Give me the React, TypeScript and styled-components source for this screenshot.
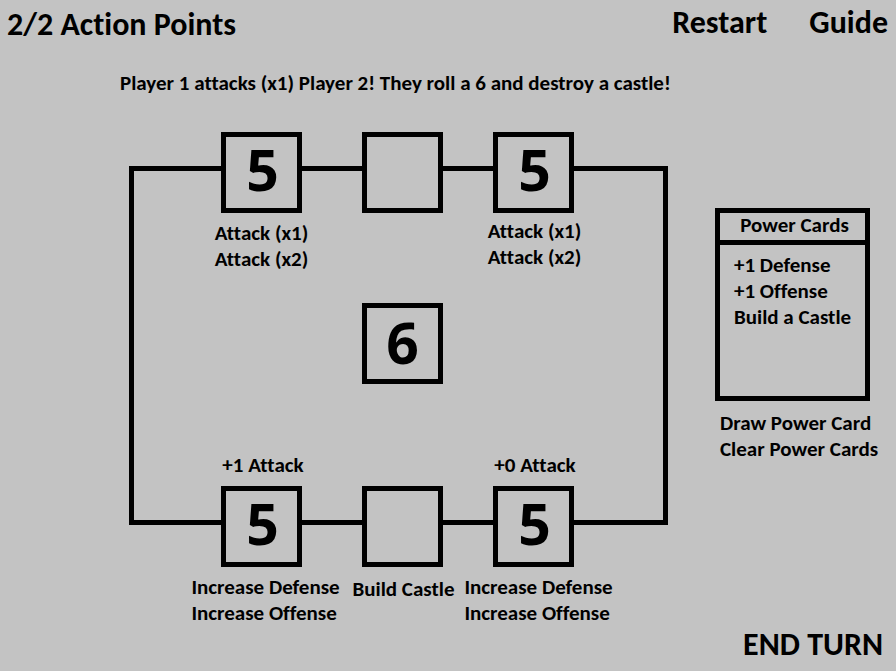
import React from "react";
import styled, { createGlobalStyle } from "styled-components";

const GlobalStyle = createGlobalStyle`
  * { box-sizing: border-box; }
  body {
    margin: 0;
    background: #c3c3c3;
    color: #000;
    font: 700 21px/26px Carlito, Calibri, Lato, sans-serif;
    font-variant-ligatures: none;
  }
`;

const Page = styled.div`
  display: flex;
  flex-direction: column;
  min-height: 100vh;
`;

const Header = styled.header`
  display: flex;
  justify-content: space-between;
  align-items: flex-start;
  padding: 4px 8px 0 7px;
  height: 44px;
`;

const ActionPoints = styled.h1`
  margin: 0;
  padding-top: 2px;
  font-size: 32px;
  line-height: 38px;
`;

const Menu = styled.nav`
  display: flex;
  gap: 42px;
`;

const TextButton = styled.button<{ $large?: boolean }>`
  padding: 0;
  border: 0;
  background: none;
  color: inherit;
  font: inherit;
  font-variant-ligatures: none;
  font-size: ${(p) => (p.$large ? 32 : 21)}px;
  line-height: ${(p) => (p.$large ? 38 : 26)}px;
  white-space: nowrap;
  cursor: pointer;
`;

const Message = styled.p`
  margin: 26px 0 36px;
  padding-left: 120px;
`;

const Main = styled.main`
  display: flex;
  align-items: flex-start;
  gap: 47px;
  padding: 0 26px 0 129px;
`;

const Board = styled.section`
  flex: 1;
  display: grid;
  grid-template-columns:
    minmax(0, 92fr) 81px minmax(0, 60fr) 81px minmax(0, 50fr)
    81px minmax(0, 94fr);
  grid-template-rows: 81px 90px 81px 102px 81px auto;
`;

const Rail = styled.div<{ $side: "left" | "right" }>`
  grid-column: ${(p) => (p.$side === "left" ? 1 : 7)};
  grid-row: 1 / 6;
  margin: 34px 0 42px;
  border: 5px solid #000;
  border-${(p) => (p.$side === "left" ? "right" : "left")}: 0;
`;

const Link = styled.div<{ $column: number; $row: number }>`
  grid-column: ${(p) => p.$column};
  grid-row: ${(p) => p.$row};
  height: 5px;
  margin-top: 34px;
  background: #000;
`;

const Tile = styled.div<{ $column: number; $row: number; $die?: boolean }>`
  grid-column: ${(p) => p.$column};
  grid-row: ${(p) => p.$row};
  display: flex;
  align-items: center;
  justify-content: center;
  padding: ${(p) => (p.$die ? "0 0 3px" : "0 0 7px 2px")};
  border: 5px solid #000;
  font-family: "Open Sans", "Noto Sans", sans-serif;
  font-size: 57px;
  line-height: 64px;
`;

const Actions = styled.div<{ $column: number; $row: number; $top: number; $indent?: number }>`
  grid-column: ${(p) => p.$column};
  grid-row: ${(p) => p.$row};
  justify-self: center;
  display: flex;
  flex-direction: column;
  align-items: flex-start;
  padding-top: ${(p) => p.$top}px;
  padding-left: ${(p) => p.$indent ?? 0}px;
`;

const Bonus = styled.div<{ $column: number }>`
  grid-column: ${(p) => p.$column};
  grid-row: 4;
  place-self: end center;
  padding: 0 0 8px 3px;
  white-space: nowrap;
`;

const Side = styled.aside`
  width: 155px;
  padding-top: 76px;
`;

const CardBox = styled.section`
  border: 5px solid #000;
`;

const CardTitle = styled.h2`
  margin: 0;
  border-bottom: 5px solid #000;
  font-size: 21px;
  line-height: 25px;
  padding: 0 0 2px 4px;
  text-align: center;
`;

const CardList = styled.ul`
  min-height: 151px;
  margin: 0;
  padding: 7px 0 7px 14px;
  list-style: none;
`;

const SideActions = styled.div`
  display: flex;
  flex-direction: column;
  align-items: flex-start;
  padding: 9px 0 0 5px;
`;

const Footer = styled.footer`
  display: flex;
  justify-content: flex-end;
  margin-top: auto;
  padding: 0 13px 7px;
`;

const cards = ["+1 Defense", "+1 Offense", "Build a Castle"];

export default function App() {
  return (
    <Page>
      <GlobalStyle />
      <Header>
        <ActionPoints>2/2 Action Points</ActionPoints>
        <Menu>
          <TextButton $large>Restart</TextButton>
          <TextButton $large>Guide</TextButton>
        </Menu>
      </Header>
      <Message>Player 1 attacks (x1) Player 2! They roll a 6 and destroy a castle!</Message>
      <Main>
        <Board aria-label="Board">
          <Rail $side="left" />
          <Rail $side="right" />
          {[1, 5].map((row) => (
            <React.Fragment key={row}>
              <Tile $column={2} $row={row}>5</Tile>
              <Link $column={3} $row={row} />
              <Tile $column={4} $row={row} />
              <Link $column={5} $row={row} />
              <Tile $column={6} $row={row}>5</Tile>
            </React.Fragment>
          ))}
          <Actions $column={2} $row={2} $top={7}>
            <TextButton>Attack (x1)</TextButton>
            <TextButton>Attack (x2)</TextButton>
          </Actions>
          <Actions $column={6} $row={2} $top={5} $indent={2}>
            <TextButton>Attack (x1)</TextButton>
            <TextButton>Attack (x2)</TextButton>
          </Actions>
          <Tile $column={4} $row={3} $die>6</Tile>
          <Bonus $column={2}>+1 Attack</Bonus>
          <Bonus $column={6}>+0 Attack</Bonus>
          <Actions $column={2} $row={6} $top={7} $indent={8}>
            <TextButton>Increase Defense</TextButton>
            <TextButton>Increase Offense</TextButton>
          </Actions>
          <Actions $column={4} $row={6} $top={9} $indent={2}>
            <TextButton>Build Castle</TextButton>
          </Actions>
          <Actions $column={6} $row={6} $top={7} $indent={10}>
            <TextButton>Increase Defense</TextButton>
            <TextButton>Increase Offense</TextButton>
          </Actions>
        </Board>
        <Side>
          <CardBox>
            <CardTitle>Power Cards</CardTitle>
            <CardList>
              {cards.map((card) => (
                <li key={card}>{card}</li>
              ))}
            </CardList>
          </CardBox>
          <SideActions>
            <TextButton>Draw Power Card</TextButton>
            <TextButton>Clear Power Cards</TextButton>
          </SideActions>
        </Side>
      </Main>
      <Footer>
        <TextButton $large>END TURN</TextButton>
      </Footer>
    </Page>
  );
}
